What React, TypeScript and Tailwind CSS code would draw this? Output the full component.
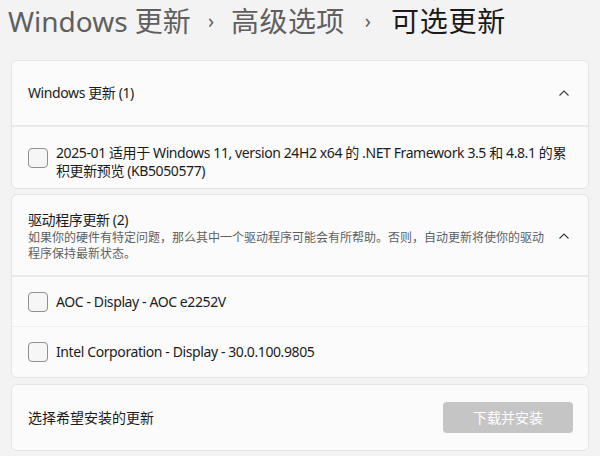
import React from "react";

const font = { fontFamily: '"Segoe UI", "Noto Sans", "Noto Sans CJK SC", sans-serif' };

function Chevron() {
  return (
    <svg width="12" height="8" viewBox="0 0 12 8" className="shrink-0">
      <path d="M1.5 6.5 L6 2 L10.5 6.5" fill="none" stroke="#3b3b3b" strokeWidth="1.1" />
    </svg>
  );
}

function Box() {
  return <div className="w-[20px] h-[20px] shrink-0 rounded-[4px] border border-[#8f8f8f] bg-[#f6f6f6]" />;
}

export default function App() {
  return (
    <div className="w-[600px] h-[456px] bg-[#f3f3f3] overflow-hidden text-[#1b1b1b]" style={font}>
      <div className="h-[60px] pl-[8px] pt-[1px] flex items-start text-[28px] leading-[40px] whitespace-nowrap">
        <span className="text-[#5f5f5f]">Windows 更新</span>
        <span className="text-[#5f5f5f] text-[20px] mx-[17px] leading-[40px]">›</span>
        <span className="text-[#5f5f5f] tracking-[0.4px]">高级选项</span>
        <span className="text-[#5f5f5f] text-[20px] ml-[20px] mr-[20px] leading-[40px]">›</span>
        <span className="text-[#1a1a1a] tracking-[0.8px]">可选更新</span>
      </div>

      <div className="mx-[11px] flex flex-col gap-[5px]">
        {/* Card 1 */}
        <div className="rounded-[6px] border border-[#e5e5e5] bg-[#fbfbfb]">
          <div className="h-[66px] pl-[16px] pr-[18px] flex items-center justify-between border-b-2 border-[#ebebeb]">
            <span className="text-[14px] leading-[20px] tracking-[-0.4px]">Windows 更新 (1)</span>
            <Chevron />
          </div>
          <div className="flex items-start gap-[8px] pl-[16px] pr-[18px] pt-[17px] pb-[8px]">
            <div className="mt-[4px]"><Box /></div>
            <div className="text-[14px] leading-[18px] whitespace-nowrap tracking-[-0.4px]">
              2025-01 适用于 Windows 11, version 24H2 x64 的 .NET Framework 3.5 和 4.8.1 的累
              <br />
              积更新预览 (KB5050577)
            </div>
          </div>
        </div>

        {/* Card 2 */}
        <div className="rounded-[6px] border border-[#e5e5e5] bg-[#fbfbfb]">
          <div className="pl-[16px] pr-[18px] pt-[15px] pb-[13px] flex items-center justify-between border-b-2 border-[#ebebeb]">
            <div>
              <div className="text-[14px] leading-[20px] tracking-[-0.4px]">驱动程序更新 (2)</div>
              <div className="text-[12px] leading-[16px] text-[#5f5f5f] whitespace-nowrap">
                如果你的硬件有特定问题，那么其中一个驱动程序可能会有所帮助。否则，自动更新将使你的驱动
                <br />
                程序保持最新状态。
              </div>
            </div>
            <Chevron />
          </div>
          <div className="h-[50px] flex items-center gap-[8px] pl-[16px] border-b border-[#efefef]">
            <Box />
            <span className="text-[14px] leading-[20px] tracking-[-0.4px]">AOC - Display - AOC e2252V</span>
          </div>
          <div className="h-[50px] flex items-center gap-[8px] pl-[16px]">
            <Box />
            <span className="text-[14px] leading-[20px] tracking-[-0.4px]">Intel Corporation - Display - 30.0.100.9805</span>
          </div>
        </div>

        {/* Card 3 */}
        <div className="mt-[1px] h-[67px] rounded-[6px] border border-[#e5e5e5] bg-[#fbfbfb] pl-[16px] pr-[15px] flex items-center justify-between">
          <span className="text-[14px] leading-[20px]">选择希望安装的更新</span>
          <div className="w-[130px] h-[31px] rounded-[4px] bg-[#c5c5c5] text-white text-[14px] flex items-center justify-center">
            下载并安装
          </div>
        </div>
      </div>
    </div>
  );
}
